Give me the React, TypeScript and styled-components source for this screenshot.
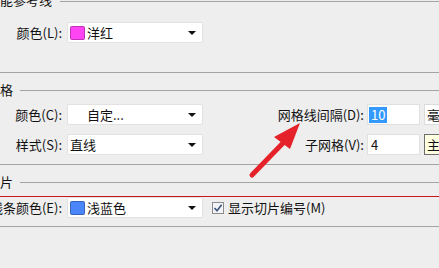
import React, { ReactElement } from "react";
import styled, { createGlobalStyle } from "styled-components";

const GlobalStyle = createGlobalStyle`
  body {
    margin: 0;
    background: #eeeeee;
    overflow: hidden;
  }
`;

const Page = styled.div`
  position: relative;
  width: 439px;
  height: 268px;
  overflow: hidden;
  background: #eeeeee;
  font-family: "Noto Sans CJK SC", "Noto Sans", sans-serif;
  font-size: 13px;
  color: #111;
  display: flex;
  flex-direction: column;
`;

const Heading = styled.div<{ $top: number }>`
  display: flex;
  align-items: center;
  gap: 7px;
  height: 16px;
  line-height: 16px;
  margin-top: ${(p) => p.$top}px;
  white-space: nowrap;
`;

const HeadingRule = styled.div<{ $shift?: number }>`
  flex: 1;
  height: 1px;
  background: #a3a3a3;
  margin-top: ${(p) => (p.$shift ?? 0) * 2}px;
`;

const Separator = styled.div<{ $top: number }>`
  height: 1px;
  flex: none;
  margin-top: ${(p) => p.$top}px;
  background: #a3a3a3;
`;

const FormRow = styled.div<{ $top: number }>`
  display: grid;
  grid-template-columns: 67px 136px 161px 56px 1fr;
  align-items: center;
  height: 21px;
  margin-top: ${(p) => p.$top}px;
`;

const Label = styled.div`
  display: flex;
  justify-content: flex-end;
  padding-right: 5px;
  white-space: nowrap;
  overflow: hidden;
`;

const RightLabel = styled.div`
  text-align: right;
  white-space: nowrap;
`;

const Select = styled.div`
  display: flex;
  align-items: center;
  gap: 2px;
  height: 21px;
  padding: 0 6px 0 2px;
  box-sizing: border-box;
  background: #fff;
  border: 1px solid #e2e2e2;
  border-radius: 2px;
`;

const Swatch = styled.span<{ $color?: string }>`
  width: 15px;
  height: 14px;
  box-sizing: border-box;
  border-radius: 2px;
  flex: none;
  background: ${(p) => p.$color ?? "transparent"};
  border: 1px solid ${(p) => (p.$color ? "rgba(0,0,0,0.25)" : "transparent")};
`;

const SelectText = styled.span`
  flex: 1;
  white-space: nowrap;
`;

const Caret = styled.span`
  width: 0;
  height: 0;
  border-left: 4px solid transparent;
  border-right: 4px solid transparent;
  border-top: 4px solid #111;
`;

const Input = styled.div`
  margin-left: 3px;
  width: 53px;
  height: 21px;
  box-sizing: border-box;
  background: #fff;
  border: 1px solid #e0e0e0;
  padding-left: 1px;
  display: flex;
  align-items: center;
`;

const Selected = styled.span`
  background: #3399ff;
  color: #fff;
  padding: 0 2px;
  line-height: 16px;
`;

const Plain = styled.span`
  padding: 0 2px;
`;

const SideBox = styled.div<{ $tip?: boolean }>`
  margin-left: 4px;
  height: 21px;
  box-sizing: border-box;
  padding-left: 2px;
  display: flex;
  align-items: center;
  white-space: nowrap;
  overflow: hidden;
  background: ${(p) => (p.$tip ? "#ffffe1" : "#fff")};
  border: 1px solid ${(p) => (p.$tip ? "#6e6e6e" : "#dcdcdc")};
  border-right: none;
`;

const RedRule = styled.div`
  height: 1px;
  margin-top: 6px;
  background: #c8161d;
`;

const CheckWrap = styled.label`
  display: flex;
  align-items: center;
  gap: 4px;
  margin-left: 9px;
  white-space: nowrap;
`;

const CheckBox = styled.span`
  width: 12px;
  height: 12px;
  box-sizing: border-box;
  border: 1px solid #8c8c8c;
  background: #f4f4f8;
  display: flex;
  align-items: center;
  justify-content: center;
`;

const Arrow = styled.svg`
  position: absolute;
  left: 0;
  top: 0;
  pointer-events: none;
`;

type ColorSelectProps = Readonly<{ color?: string; text: string }>;

const ColorSelect = ({ color, text }: ColorSelectProps): ReactElement => (
  <Select>
    <Swatch $color={color} />
    <SelectText>{text}</SelectText>
    <Caret />
  </Select>
);

const App = (): ReactElement => {
  return (
    <Page>
      <GlobalStyle />
      <Heading $top={-8}>
        能参考线
        <HeadingRule $shift={1} style={{ marginLeft: 1 }} />
      </Heading>
      <FormRow $top={14}>
        <Label>颜色(L):</Label>
        <ColorSelect color="#ff44f4" text="洋红" />
      </FormRow>

      <Separator $top={29} />
      <Heading $top={9}>
        格
        <HeadingRule />
      </Heading>
      <FormRow $top={6}>
        <Label>颜色(C):</Label>
        <ColorSelect text="自定..." />
        <RightLabel>网格线间隔(D):</RightLabel>
        <Input>
          <Selected>10</Selected>
        </Input>
        <SideBox>毫米</SideBox>
      </FormRow>
      <FormRow $top={9}>
        <Label>样式(S):</Label>
        <Select>
          <SelectText>直线</SelectText>
          <Caret />
        </Select>
        <RightLabel>子网格(V):</RightLabel>
        <Input>
          <Plain>4</Plain>
        </Input>
        <SideBox $tip>主</SideBox>
      </FormRow>

      <Separator $top={9} />
      <Heading $top={9}>
        片
        <HeadingRule />
      </Heading>
      <RedRule />
      <FormRow $top={0}>
        <Label>
          <span>线条颜色(E):</span>
        </Label>
        <ColorSelect color="#4a86f7" text="浅蓝色" />
        <CheckWrap>
          <CheckBox>
            <svg width="10" height="10" viewBox="0 0 10 10">
              <path d="M1.5 5 L4 7.8 L8.6 1.8" fill="none" stroke="#3b557d" strokeWidth="1.6" />
            </svg>
          </CheckBox>
          显示切片编号(M)
        </CheckWrap>
      </FormRow>
      <Separator $top={8} />

      <Arrow width="439" height="268" viewBox="0 0 439 268">
        <line x1="252" y1="175" x2="285" y2="141" stroke="#e5222a" strokeWidth="5" strokeLinecap="round" />
        <polygon points="300,123 274,137 290,149" fill="#e5222a" />
      </Arrow>
    </Page>
  );
};

export default App;
